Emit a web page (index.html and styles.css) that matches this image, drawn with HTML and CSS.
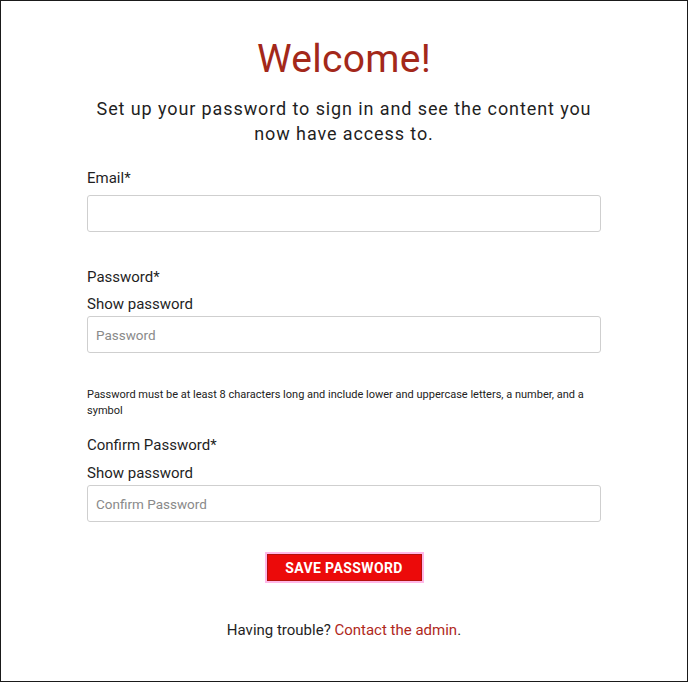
FILE: index.html
```html
<!DOCTYPE html>
<html lang="en">
<head>
<meta charset="utf-8">
<title>Welcome</title>
<link rel="stylesheet" href="styles.css">
</head>
<body>
<div class="frame">
  <main class="card">
    <h1 class="title">Welcome!</h1>
    <p class="intro">Set up your password to sign in and see the content you now have access to.</p>
    <form class="form">
      <div class="field">
        <label class="label label-email" for="email">Email*</label>
        <input class="input" id="email" type="email">
      </div>
      <div class="field field-pw">
        <label class="label label-pw" for="pw">Password*</label>
        <span class="show">Show password</span>
        <input class="input" id="pw" type="password" placeholder="Password">
      </div>
      <p class="hint">Password must be at least 8 characters long and include lower and uppercase letters, a number, and a symbol</p>
      <div class="field">
        <label class="label" for="cpw">Confirm Password*</label>
        <span class="show">Show password</span>
        <input class="input" id="cpw" type="password" placeholder="Confirm Password">
      </div>
      <div class="actions">
        <button class="btn" type="button">Save Password</button>
      </div>
    </form>
    <p class="help">Having trouble? <a class="link" href="#">Contact the admin</a>.</p>
  </main>
</div>
</body>
</html>
```

FILE: styles.css
```css
html, body {
  margin: 0;
  padding: 0;
  background: #fff;
}
body {
  font-family: Roboto, "Liberation Sans", Arial, sans-serif;
  color: #1f1f1f;
}
.frame {
  box-sizing: border-box;
  width: 688px;
  height: 682px;
  border: 1px solid #1a1a1a;
  display: flex;
  justify-content: center;
}
.card {
  width: 514px;
  padding-top: 35px;
  display: flex;
  flex-direction: column;
  align-items: stretch;
}
.title {
  margin: 0;
  text-align: center;
  font-size: 39px;
  line-height: 46px;
  font-weight: 400;
  color: #a3281a;
  letter-spacing: 0.3px;
}
.intro {
  margin: 14px 0 0;
  text-align: center;
  font-size: 18px;
  line-height: 25px;
  letter-spacing: 0.9px;
  color: #1f1f1f;
}
.form {
  display: flex;
  flex-direction: column;
  margin-top: 22px;
}
.field {
  display: flex;
  flex-direction: column;
}
.field-pw {
  margin-top: 35px;
}
.label, .show {
  font-size: 15px;
  line-height: 20px;
  color: #1f1f1f;
}
.label {
  margin-bottom: 8px;
}
.label-email {
  margin-bottom: 7px;
}
.label-pw {
  margin-bottom: 7px;
}
.show {
  margin-bottom: 2px;
}
.input {
  box-sizing: border-box;
  width: 100%;
  height: 37px;
  border: 1px solid #cfcfcf;
  border-radius: 3px;
  padding: 0 8px;
  font-family: Roboto, "Liberation Sans", Arial, sans-serif;
  font-size: 13.5px;
  color: #333;
  background: #fff;
}
.input::placeholder {
  color: #8a8a8a;
}
.hint {
  margin: 34px 0 16px;
  font-size: 11px;
  line-height: 16px;
  color: #222;
}
.actions {
  display: flex;
  justify-content: center;
  margin-top: 32px;
}
.btn {
  box-sizing: border-box;
  width: 155px;
  height: 27px;
  border: 1px solid #b3120e;
  box-shadow: 0 0 0 2px #ffb8e8;
  background: #ec0a0a;
  color: #fff;
  font-family: Roboto, "Liberation Sans", Arial, sans-serif;
  font-weight: 700;
  font-size: 14px;
  text-transform: uppercase;
  letter-spacing: 0.4px;
  padding: 0;
  cursor: pointer;
}
.help {
  margin: 39px 0 0;
  text-align: center;
  font-size: 15px;
  line-height: 20px;
  color: #1f1f1f;
}
.link {
  color: #b0281c;
  text-decoration: none;
}
```
